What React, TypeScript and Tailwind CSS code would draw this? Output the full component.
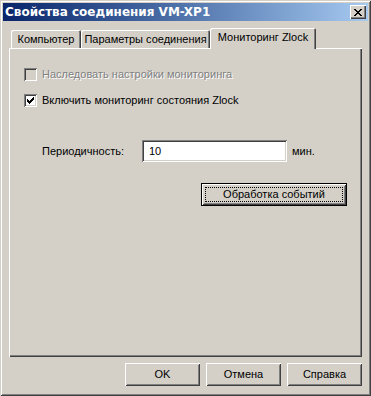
import React from "react";

const raised =
  "shadow-[inset_1px_1px_0_#fff,inset_-1px_-1px_0_#404040,inset_2px_2px_0_#d4d0c8,inset_-2px_-2px_0_#808080]";
const sunken =
  "shadow-[inset_1px_1px_0_#808080,inset_-1px_-1px_0_#fff,inset_2px_2px_0_#404040,inset_-2px_-2px_0_#d4d0c8]";

function Check() {
  const rows: [number, number, number][] = [
    [6, 0, 1],
    [5, 1, 2],
    [0, 2, 1],
    [4, 2, 3],
    [0, 3, 2],
    [3, 3, 3],
    [0, 4, 5],
    [1, 5, 3],
    [2, 6, 1],
  ];
  return (
    <svg width="7" height="7" viewBox="0 0 7 7" shapeRendering="crispEdges">
      {rows.map(([x, y, w], i) => (
        <rect key={i} x={x} y={y} width={w} height={1} fill="#000" />
      ))}
    </svg>
  );
}

function CloseX() {
  const rows: [number, number, number][] = [
    [0, 0, 2],
    [6, 0, 2],
    [1, 1, 2],
    [5, 1, 2],
    [2, 2, 4],
    [3, 3, 2],
    [2, 4, 4],
    [1, 5, 2],
    [5, 5, 2],
    [0, 6, 2],
    [6, 6, 2],
  ];
  return (
    <svg width="8" height="7" viewBox="0 0 8 7" shapeRendering="crispEdges">
      {rows.map(([x, y, w], i) => (
        <rect key={i} x={x} y={y} width={w} height={1} fill="#000" />
      ))}
    </svg>
  );
}

function Btn({ label }: { label: string }) {
  return (
    <div
      className={`w-[75px] h-[23px] flex items-center justify-center bg-[#d4d0c8] ${raised}`}
    >
      {label}
    </div>
  );
}

export default function App() {
  return (
    <div
      className="w-[371px] h-[396px] p-[3px] flex flex-col bg-[#d4d0c8] text-[11px] leading-[13px] text-black font-['Liberation_Sans',Arial,sans-serif] shadow-[inset_1px_1px_0_#d4d0c8,inset_-1px_-1px_0_#404040,inset_2px_2px_0_#fff,inset_-2px_-2px_0_#808080]"
    >
      {/* Title bar */}
      <div className="h-[18px] flex items-center justify-between bg-linear-to-r from-[#0a246a] to-[#a6caf0] pl-[2px] pr-[2px]">
        <span className="text-white font-bold text-[12px] leading-[14px] font-['DejaVu_Sans',Verdana,sans-serif]">
          Свойства соединения VM-XP1
        </span>
        <div
          className={`w-[16px] h-[14px] flex items-center justify-center bg-[#d4d0c8] shadow-[inset_1px_1px_0_#fff,inset_-1px_-1px_0_#404040,inset_-2px_-2px_0_#808080]`}
        >
          <CloseX />
        </div>
      </div>

      {/* Body */}
      <div className="flex-1 flex flex-col px-[6px] pt-[7px]">
        {/* Tabs */}
        <div className="h-[20px] flex items-end pl-[2px]">
          <div className="w-[70px] h-[18px] flex items-center justify-center bg-[#d4d0c8] rounded-t-[2px] shadow-[inset_1px_1px_0_#fff,inset_-1px_0_0_#404040,inset_-2px_0_0_#808080]">
            Компьютер
          </div>
          <div className="w-[129px] h-[18px] flex items-center justify-center bg-[#d4d0c8] rounded-t-[2px] shadow-[inset_1px_1px_0_#fff,inset_-1px_0_0_#404040,inset_-2px_0_0_#808080]">
            Параметры соединения
          </div>
          <div className="relative z-10 -mb-[1px] w-[106px] h-[21px] flex items-center justify-center pb-[2px] bg-[#d4d0c8] rounded-t-[2px] shadow-[inset_1px_1px_0_#fff,inset_-1px_0_0_#404040,inset_-2px_0_0_#808080]">
            Мониторинг Zlock
          </div>
        </div>

        {/* Panel */}
        <div className="h-[309px] flex flex-col pl-[15px] pt-[20px] bg-[#d4d0c8] shadow-[inset_1px_1px_0_#fff,inset_-1px_-1px_0_#404040,inset_-2px_-2px_0_#808080]">
          <div className="h-[13px] flex items-center gap-[5px]">
            <div className={`w-[13px] h-[13px] bg-[#d4d0c8] ${sunken}`} />
            <span className="text-[#808080] [text-shadow:1px_1px_0_#fff]">
              Наследовать настройки мониторинга
            </span>
          </div>
          <div className="h-[13px] mt-[13px] flex items-center gap-[5px]">
            <div
              className={`w-[13px] h-[13px] bg-white flex items-center justify-center ${sunken}`}
            >
              <Check />
            </div>
            <span>Включить мониторинг состояния Zlock</span>
          </div>

          <div className="mt-[33px] pl-[18px] flex items-center h-[22px]">
            <span className="w-[100px]">Периодичность:</span>
            <div
              className={`w-[145px] h-[22px] bg-white flex items-center pl-[7px] ${sunken}`}
            >
              10
            </div>
            <span className="ml-[5px]">мин.</span>
          </div>

          <div className="mt-[21px] ml-[177px] relative w-[146px] h-[23px] border border-black bg-[#d4d0c8] flex items-center justify-center">
            <div className={`absolute inset-0 ${raised}`} />
            <div className="absolute inset-[3px] border border-dotted border-black" />
            <span className="relative">Обработка событий</span>
          </div>
        </div>

        {/* Bottom buttons */}
        <div className="mt-[6px] flex justify-end gap-[6px]">
          <Btn label="OK" />
          <Btn label="Отмена" />
          <Btn label="Справка" />
        </div>
      </div>
    </div>
  );
}
